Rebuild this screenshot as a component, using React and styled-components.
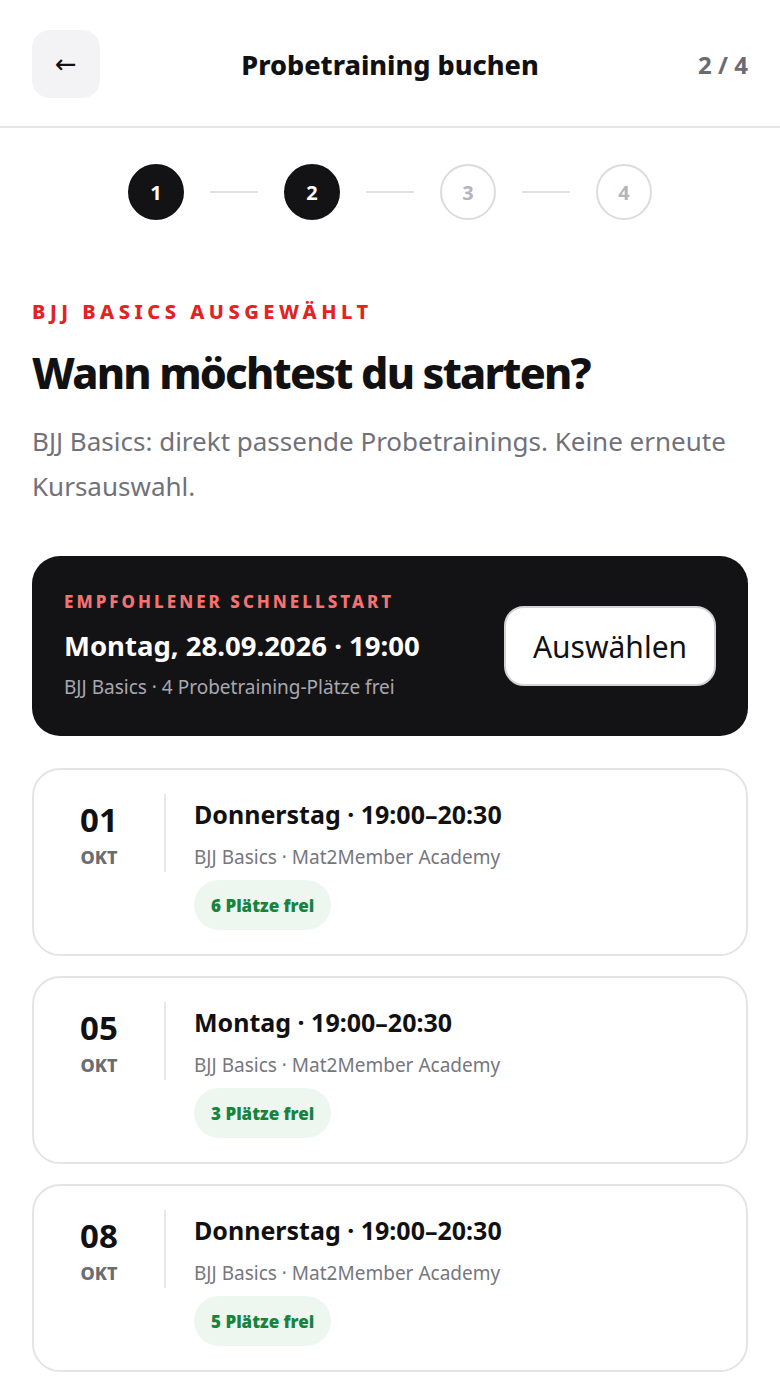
import React from 'react'
import styled, { createGlobalStyle } from 'styled-components'

const GlobalStyle = createGlobalStyle`
    * { box-sizing: border-box; }
    body {
        margin: 0;
        background: #fff;
        font-family: "Noto Sans", "Open Sans", sans-serif;
        color: #111114;
    }
`

const Page = styled.div`
    width: 780px;
    min-height: 1380px;
    background: #fff;
`

const Header = styled.header`
    display: grid;
    grid-template-columns: 68px 1fr 68px;
    align-items: center;
    padding: 30px 32px 28px;
    border-bottom: 2px solid #e6e6ea;
`

const BackButton = styled.button`
    width: 68px;
    height: 68px;
    border: none;
    border-radius: 18px;
    background: #f3f3f5;
    font-size: 26px;
    color: #111114;
    font-family: "DejaVu Sans", sans-serif;
    display: flex;
    align-items: center;
    justify-content: center;
    padding: 0;
`

const Title = styled.h1`
    margin: 0;
    text-align: center;
    font-size: 27px;
    font-weight: 800;
`

const StepCount = styled.span`
    text-align: right;
    font-size: 24px;
    font-weight: 700;
    color: #6b6b73;
`

const Stepper = styled.div`
    display: flex;
    justify-content: center;
    align-items: center;
    gap: 26px;
    padding-top: 36px;
`

const Step = styled.div`
    width: 56px;
    height: 56px;
    border-radius: 50%;
    display: flex;
    align-items: center;
    justify-content: center;
    font-size: 20px;
    font-weight: 700;
    background: ${ p => p.active ? '#131316' : '#fff' };
    color: ${ p => p.active ? '#fff' : '#b4b4bb' };
    border: 2px solid ${ p => p.active ? '#131316' : '#dcdce0' };
`

const StepLine = styled.div`
    width: 48px;
    height: 2px;
    background: #e2e2e6;
`

const Main = styled.main`
    padding: 80px 32px 0;
`

const Eyebrow = styled.div`
    font-size: 20px;
    line-height: 24px;
    font-weight: 800;
    letter-spacing: 4.5px;
    color: #e02424;
`

const Heading = styled.h2`
    margin: 23px 0 0;
    font-size: 43px;
    line-height: 52px;
    font-weight: 800;
    letter-spacing: -1.8px;
`

const Lead = styled.p`
    margin: 20px 0 0;
    font-size: 26px;
    line-height: 45px;
    color: #71717a;
`

const QuickCard = styled.section`
    margin-top: 47px;
    background: #131316;
    border-radius: 28px;
    padding: 36px 32px;
    display: flex;
    align-items: center;
    justify-content: space-between;
`

const QuickLabel = styled.div`
    font-size: 17px;
    line-height: 20px;
    font-weight: 800;
    letter-spacing: 3px;
    color: #f87171;
`

const QuickTitle = styled.div`
    margin-top: 16px;
    font-size: 27.5px;
    line-height: 36px;
    font-weight: 700;
    color: #fff;
`

const QuickSub = styled.div`
    margin-top: 10px;
    font-size: 19px;
    line-height: 26px;
    color: #a8a8b0;
`

const SelectButton = styled.button`
    width: 212px;
    height: 80px;
    border-radius: 20px;
    border: 2px solid #d4d4d8;
    background: #fff;
    color: #111114;
    font-family: "Noto Sans", sans-serif;
    font-size: 30px;
`

const SlotList = styled.div`
    display: flex;
    flex-direction: column;
    gap: 20px;
    margin-top: 32px;
`

const SlotCard = styled.article`
    display: flex;
    align-items: flex-start;
    border: 2px solid #e4e4e7;
    border-radius: 28px;
    padding: 24px 28px 24px 0;
`

const DateCol = styled.div`
    width: 132px;
    flex-shrink: 0;
    text-align: center;
    padding: 6px 0 3px;
    border-right: 2px solid #e8e8eb;
`

const Day = styled.div`
    font-size: 33px;
    line-height: 40px;
    font-weight: 700;
`

const Month = styled.div`
    margin-top: 5px;
    font-size: 18px;
    line-height: 24px;
    font-weight: 800;
    color: #6b6b73;
`

const SlotBody = styled.div`
    margin-left: 28px;
`

const SlotTitle = styled.div`
    font-size: 25px;
    line-height: 40px;
    font-weight: 700;
`

const SlotSub = styled.div`
    margin-top: 7px;
    font-size: 19px;
    line-height: 32px;
    color: #76767e;
`

const Badge = styled.span`
    display: inline-flex;
    align-items: center;
    margin-top: 7px;
    height: 50px;
    padding: 0 17px;
    border-radius: 25px;
    background: #edf7f0;
    color: #18823f;
    font-size: 17px;
    font-weight: 900;
`

const slots = [
    { day: '01', weekday: 'Donnerstag', seats: 6 },
    { day: '05', weekday: 'Montag', seats: 3 },
    { day: '08', weekday: 'Donnerstag', seats: 5 },
]

export default function App() {
    return (
        <Page>
            <GlobalStyle />
            <Header>
                <BackButton aria-label="Zurück">←</BackButton>
                <Title>Probetraining buchen</Title>
                <StepCount>2 / 4</StepCount>
            </Header>

            <Stepper>
                <Step active>1</Step>
                <StepLine />
                <Step active>2</Step>
                <StepLine />
                <Step>3</Step>
                <StepLine />
                <Step>4</Step>
            </Stepper>

            <Main>
                <Eyebrow>BJJ BASICS AUSGEWÄHLT</Eyebrow>
                <Heading>Wann möchtest du starten?</Heading>
                <Lead>BJJ Basics: direkt passende Probetrainings. Keine erneute Kursauswahl.</Lead>

                <QuickCard>
                    <div>
                        <QuickLabel>EMPFOHLENER SCHNELLSTART</QuickLabel>
                        <QuickTitle>Montag, 28.09.2026 · 19:00</QuickTitle>
                        <QuickSub>BJJ Basics · 4 Probetraining-Plätze frei</QuickSub>
                    </div>
                    <SelectButton>Auswählen</SelectButton>
                </QuickCard>

                <SlotList>
                    { slots.map(slot => (
                        <SlotCard key={ slot.day }>
                            <DateCol>
                                <Day>{ slot.day }</Day>
                                <Month>OKT</Month>
                            </DateCol>
                            <SlotBody>
                                <SlotTitle>{ slot.weekday } · 19:00–20:30</SlotTitle>
                                <SlotSub>BJJ Basics · Mat2Member Academy</SlotSub>
                                <Badge>{ slot.seats } Plätze frei</Badge>
                            </SlotBody>
                        </SlotCard>
                    )) }
                </SlotList>
            </Main>
        </Page>
    )
}
